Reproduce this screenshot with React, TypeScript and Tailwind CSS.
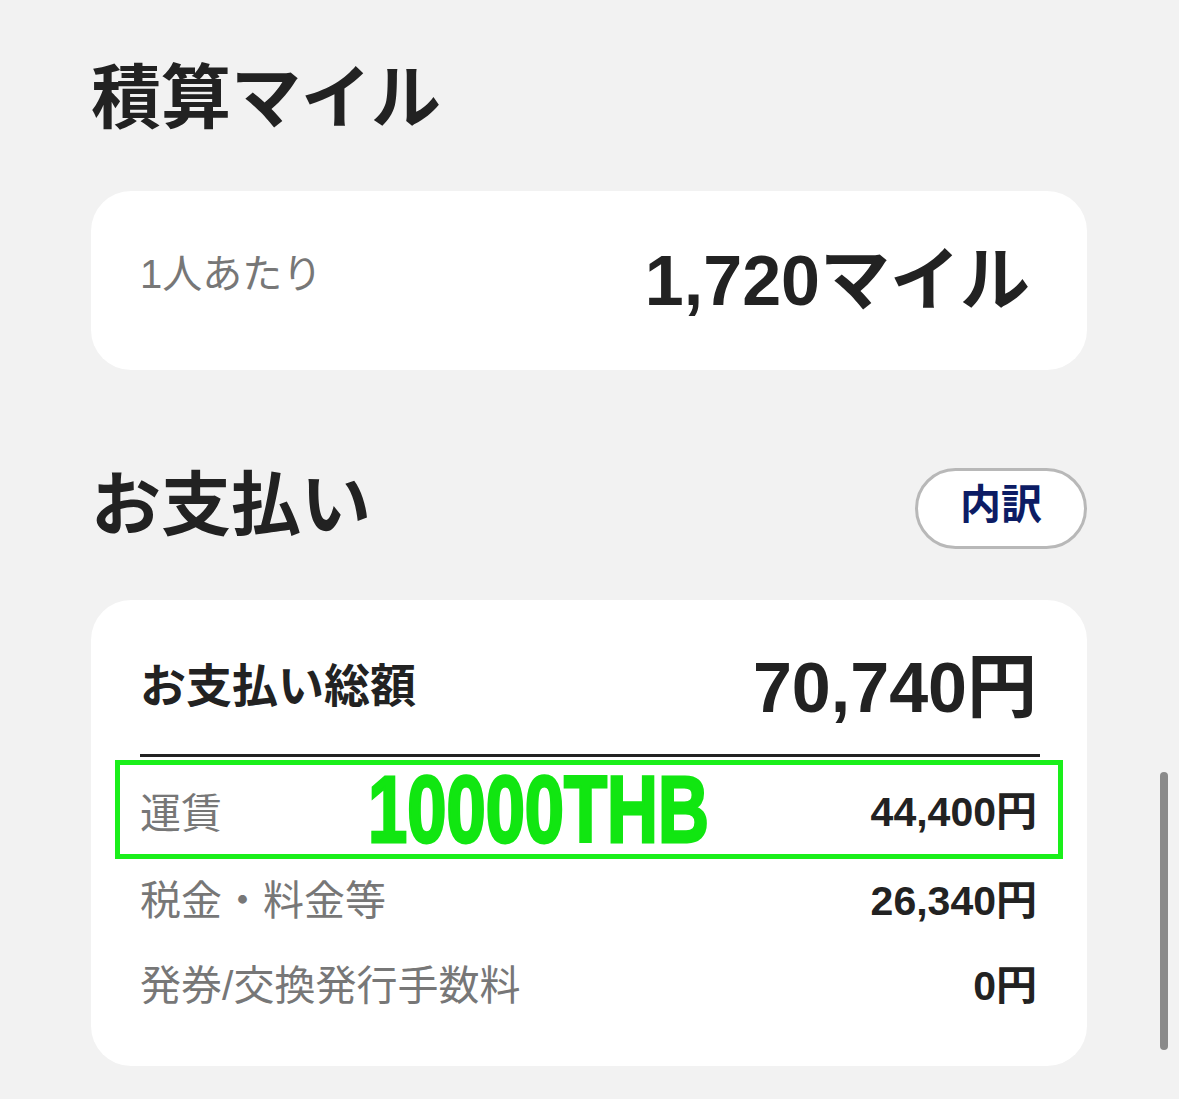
export default function App() {
  return (
    <div className="relative min-h-screen bg-[#f2f2f2] pl-[91px] pr-[92px] pt-[54px] pb-[33px] font-['Liberation_Sans','Noto_Sans_CJK_JP',sans-serif] text-[#222]">
      {/* 積算マイル */}
      <h1 className="text-[70px] font-bold leading-[90px]">積算マイル</h1>
      <div className="mt-[47px] flex h-[179px] items-center justify-between rounded-[40px] bg-white pl-[49px] pr-[57px]">
        <span className="mb-[14px] text-[40px] leading-none text-[#777]">1人あたり</span>
        <span className="text-[70px] font-bold leading-none">1,720マイル</span>
      </div>

      {/* お支払い */}
      <div className="mt-[98px] flex h-[81px] items-center justify-between">
        <h2 className="mb-[4px] text-[70px] font-bold leading-[81px]">お支払い</h2>
        <button className="flex h-[81px] w-[172px] items-center justify-center rounded-full border-[3px] border-[#b8b8b8] bg-white pb-[6px] text-[41px] font-bold leading-none text-[#0c1c64]">
          内訳
        </button>
      </div>

      <div className="mt-[51px] flex flex-col rounded-[40px] bg-white pl-[49px] pr-[50px] pt-[38px] pb-[37px]">
        <div className="flex h-[100px] items-center justify-between">
          <span className="mb-[4px] text-[46px] font-bold leading-none">お支払い総額</span>
          <span className="text-[70px] font-bold leading-none">70,740円</span>
        </div>
        <div className="-mr-[3px] mt-[16px] h-[3px] bg-[#222]" />

        <div className="-ml-[25px] -mr-[26px] mt-[3px] flex h-[99px] items-center border-[5px] border-[#1aef1a] pl-[20px] pr-[21px]">
          <span className="w-[228px] pt-[10px] text-[41px] leading-none text-[#777]">運賃</span>
          <span className="w-[338px] whitespace-nowrap">
            <span className="inline-block origin-left scale-x-[0.75] text-[94px] font-bold leading-none text-[#11e611] [-webkit-text-stroke:3px_#11e611]">
              10000THB
            </span>
          </span>
          <span className="ml-auto pt-[5px] text-[41px] font-bold leading-none">44,400円</span>
        </div>

        <div className="flex h-[84px] items-center justify-between">
          <span className="text-[41px] leading-none text-[#777]">税金・料金等</span>
          <span className="text-[41px] font-bold leading-none">26,340円</span>
        </div>
        <div className="flex h-[86px] items-center justify-between">
          <span className="text-[41px] leading-none text-[#777]">発券/交換発行手数料</span>
          <span className="text-[41px] font-bold leading-none">0円</span>
        </div>
      </div>

      {/* scroll indicator */}
      <div className="absolute left-[1160px] top-[772px] h-[278px] w-[8px] rounded-full bg-[#8a8a8a]" />
    </div>
  );
}
